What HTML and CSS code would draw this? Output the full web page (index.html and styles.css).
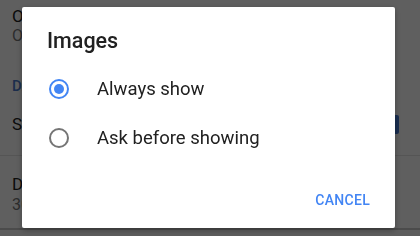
FILE: index.html
```html
<!DOCTYPE html>
<html lang="en">
<head>
  <meta charset="UTF-8" />
  <meta name="viewport" content="width=device-width, initial-scale=1.0" />
  <title>Images</title>
  <link rel="stylesheet" href="styles.css">
</head>
<body>
  <div class="page">
    <div class="item">
      <div class="item-title">Offline pages</div>
      <div class="item-sub">Off</div>
    </div>
    <div class="section">DATA SAVER</div>
    <div class="item row">
      <div class="item-title">Saving mode</div>
      <div class="toggle">ON</div>
    </div>
    <div class="item bordered">
      <div class="item-title">Data usage</div>
      <div class="item-sub">30 days</div>
    </div>
    <div class="bottom-bar"></div>
  </div>

  <div class="scrim"></div>

  <div class="dialog">
    <h2 class="dialog-title">Images</h2>
    <label class="option">
      <span class="radio checked"></span>
      <span>Always show</span>
    </label>
    <label class="option">
      <span class="radio"></span>
      <span>Ask before showing</span>
    </label>
    <div class="actions">
      <button class="btn">CANCEL</button>
    </div>
  </div>
</body>
</html>
```

FILE: styles.css
```css
html, body {
  margin: 0;
  height: 100%;
  overflow: hidden;
}
body {
  font-family: Roboto, 'Noto Sans', sans-serif;
  background: #fafafa;
  color: #212121;
}
.page {
  padding-top: 6px;
  height: 100%;
  box-sizing: border-box;
  position: relative;
}
.item {
  padding: 0 12px;
}
.item-title {
  font-size: 17px;
  line-height: 20px;
}
.item-sub {
  font-size: 16px;
  line-height: 20px;
  color: #757575;
}
.section {
  padding: 0 12px;
  margin-top: 30px;
  font-size: 15px;
  line-height: 20px;
  font-weight: 500;
  color: #4a78c8;
}
.row {
  display: flex;
  justify-content: space-between;
  align-items: center;
  height: 20px;
  margin-top: 18px;
  padding-right: 21px;
  padding-bottom: 21px;
}
.toggle {
  background: #4478d0;
  color: #fff;
  font-size: 13px;
  line-height: 19px;
  padding: 0 10px;
  border-radius: 2px;
}
.bordered {
  border-top: 1px solid #e0e0e0;
  padding-top: 18px;
}
.bordered .item-sub {
  margin-top: 1px;
}
.bottom-bar {
  position: absolute;
  left: 0;
  right: 0;
  bottom: 0;
  height: 6px;
  background: #f4f4f4;
  border-top: 2px solid #c4c4c4;
}
.scrim {
  position: fixed;
  inset: 0;
  background: rgba(0, 0, 0, 0.62);
}
.dialog {
  position: fixed;
  left: 22px;
  top: 7px;
  width: 373px;
  height: 221px;
  box-sizing: border-box;
  background: #fff;
  border-radius: 2px;
  box-shadow: 0 2px 6px rgba(0, 0, 0, 0.3);
  padding: 21px 0 0 25px;
  display: flex;
  flex-direction: column;
}
.dialog-title {
  margin: 0 0 10px;
  font-size: 21.5px;
  font-weight: 500;
  line-height: 26px;
  color: #212121;
}
.option {
  display: flex;
  align-items: center;
  height: 49px;
  font-size: 18.5px;
  color: #212121;
}
.radio {
  width: 16px;
  height: 16px;
  border: 2px solid #757575;
  border-radius: 50%;
  margin: 0 28px 0 2px;
  display: flex;
  align-items: center;
  justify-content: center;
}
.radio.checked {
  border-color: #4285f4;
}
.radio.checked::after {
  content: '';
  width: 10px;
  height: 10px;
  border-radius: 50%;
  background: #4285f4;
}
.actions {
  margin-top: auto;
  display: flex;
  justify-content: flex-end;
  padding: 0 25px 20px 0;
}
.btn {
  font-family: Roboto, 'Noto Sans', sans-serif;
  font-size: 14px;
  font-weight: 500;
  color: #4285f4;
  background: none;
  border: 0;
  padding: 0;
  letter-spacing: 0.3px;
}
```
